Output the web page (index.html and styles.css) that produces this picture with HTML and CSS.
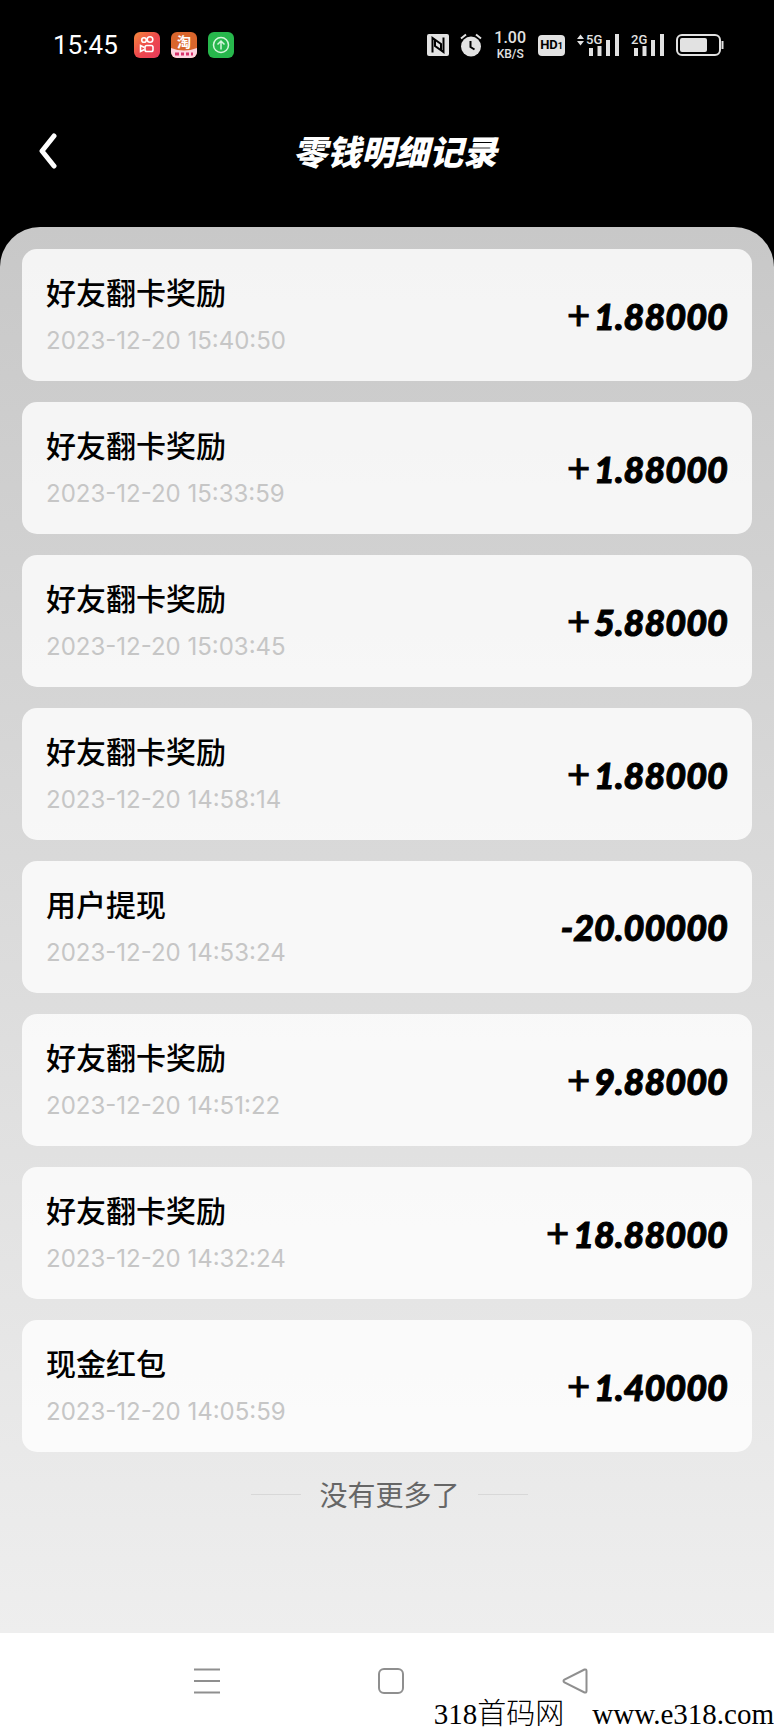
FILE: index.html
```
<!DOCTYPE html>
<html lang="zh-CN">
<head>
    <meta charset="UTF-8">
    <meta name="viewport" content="width=device-width, initial-scale=1.0">
    <title>零钱明细记录</title>
    <link rel="stylesheet" href="styles.css">
</head>
<body>
    <div class="status-bar">
        <div class="status-left">
            <span class="clock">15:45</span>
            <svg class="app-icon" viewBox="0 0 26 26">
                <defs>
                    <linearGradient id="ks" x1="0" y1="0" x2="1" y2="1">
                        <stop offset="0" stop-color="#f58a3c"/>
                        <stop offset="0.5" stop-color="#ee4a4c"/>
                        <stop offset="1" stop-color="#e63a5c"/>
                    </linearGradient>
                </defs>
                <rect width="26" height="26" rx="6" fill="url(#ks)"/>
                <g fill="none" stroke="#fff" stroke-width="1.6">
                    <circle cx="10" cy="8" r="2.3"/>
                    <circle cx="16" cy="7.500" r="2.800"/>
                    <rect x="11" y="13.500" width="8" height="6" rx="1.800"/>
                    <path d="M10.500 15.500l-4-2v6l4-2"/>
                </g>
            </svg>
            <svg class="app-icon" viewBox="0 0 26 26">
                <defs>
                    <clipPath id="tb"><rect width="26" height="26" rx="6"/></clipPath>
                </defs>
                <g clip-path="url(#tb)">
                    <rect width="26" height="26" fill="#d9652c"/>
                    <path d="M0 16q13 5 26 0v10H0z" fill="#fbd3df"/>
                    <path d="M4 22h4M10 22h3M15 22h3M20 22h2" stroke="#d8326c" stroke-width="3"/>
                </g>
                <text class="app-char" x="13" y="15" text-anchor="middle">淘</text>
            </svg>
            <svg class="app-icon" viewBox="0 0 26 26">
                <rect width="26" height="26" rx="6" fill="#27b74c"/>
                <g fill="none" stroke="#d5f5dc" stroke-width="1.500">
                    <circle cx="13" cy="13" r="7.500"/>
                    <path d="M13 17.500V9M9.500 12.500L13 9l3.500 3.500"/>
                </g>
            </svg>
        </div>
        <div class="status-right">
            <svg class="nfc" viewBox="0 0 22 22">
                <rect width="22" height="22" rx="2" fill="#e2e2e2"/>
                <path d="M5.500 18.500V4l8.500 6v6M16.500 3.500V18L8 12V6" fill="none" stroke="#000" stroke-width="2"/>
            </svg>
            <svg class="alarm" viewBox="0 0 22 24">
                <circle cx="11" cy="13.500" r="10" fill="#e2e2e2"/>
                <path d="M1 5.500l5-4M21 5.500l-5-4" stroke="#e2e2e2" stroke-width="2"/>
                <path d="M10.500 8v6l4 2.500" fill="none" stroke="#000" stroke-width="2"/>
            </svg>
            <div class="net-speed"><b>1.00</b><span>KB/S</span></div>
            <div class="hd">HD<small>1</small></div>
            <svg class="signal-5g" viewBox="0 0 44 24">
                <path d="M1 6l3.500-4.500L8 6zM1 8l3.500 4.500L8 8z" fill="#e2e2e2"/>
                <text class="net-type" x="10" y="11">5G</text>
                <path d="M13 15h4v8h-4zM21.500 13h4v10h-4zM30 7h4v16h-4zM39 1h4v22h-4z" fill="#e2e2e2"/>
            </svg>
            <svg class="signal-2g" viewBox="0 0 34 24">
                <text class="net-type" x="0" y="11">2G</text>
                <path d="M3 15h4v8H3zM11.500 13h4v10h-4zM20 7h4v16h-4zM29 1h4v22h-4z" fill="#e2e2e2"/>
            </svg>
            <svg class="battery" viewBox="0 0 48 24">
                <rect x="1" y="2" width="43" height="20" rx="5" fill="none" stroke="#e2e2e2" stroke-width="2"/>
                <rect x="4" y="5" width="27" height="14" rx="2" fill="#e2e2e2"/>
                <path d="M46.500 8v8" stroke="#e2e2e2" stroke-width="2"/>
            </svg>
        </div>
    </div>

    <header class="header">
        <button class="back" aria-label="返回">
            <svg viewBox="0 0 20 36"><path d="M17 3L5 18l12 15" fill="none" stroke="#fff" stroke-width="5" stroke-linecap="round" stroke-linejoin="round"/></svg>
        </button>
        <h1>零钱明细记录</h1>
    </header>

    <main class="panel">
        <ul class="records">
            <li class="record">
                <div>
                    <h2>好友翻卡奖励</h2>
                    <time>2023-12-20 15:40:50</time>
                </div>
                <span class="amount"><i>+</i>1.88000</span>
            </li>
            <li class="record">
                <div>
                    <h2>好友翻卡奖励</h2>
                    <time>2023-12-20 15:33:59</time>
                </div>
                <span class="amount"><i>+</i>1.88000</span>
            </li>
            <li class="record">
                <div>
                    <h2>好友翻卡奖励</h2>
                    <time>2023-12-20 15:03:45</time>
                </div>
                <span class="amount"><i>+</i>5.88000</span>
            </li>
            <li class="record">
                <div>
                    <h2>好友翻卡奖励</h2>
                    <time>2023-12-20 14:58:14</time>
                </div>
                <span class="amount"><i>+</i>1.88000</span>
            </li>
            <li class="record">
                <div>
                    <h2>用户提现</h2>
                    <time>2023-12-20 14:53:24</time>
                </div>
                <span class="amount">-20.00000</span>
            </li>
            <li class="record">
                <div>
                    <h2>好友翻卡奖励</h2>
                    <time>2023-12-20 14:51:22</time>
                </div>
                <span class="amount"><i>+</i>9.88000</span>
            </li>
            <li class="record">
                <div>
                    <h2>好友翻卡奖励</h2>
                    <time>2023-12-20 14:32:24</time>
                </div>
                <span class="amount"><i>+</i>18.88000</span>
            </li>
            <li class="record">
                <div>
                    <h2>现金红包</h2>
                    <time>2023-12-20 14:05:59</time>
                </div>
                <span class="amount"><i>+</i>1.40000</span>
            </li>
        </ul>
        <p class="no-more">没有更多了</p>
    </main>

    <nav class="nav-bar">
        <button aria-label="菜单">
            <svg viewBox="0 0 26 26"><path d="M0 1.500h26M0 13h26M0 24.500h26" stroke="#8f8f8f" stroke-width="2"/></svg>
        </button>
        <button aria-label="主页">
            <svg viewBox="0 0 26 26"><rect x="1" y="1" width="24" height="24" rx="5" fill="none" stroke="#8f8f8f" stroke-width="2"/></svg>
        </button>
        <button aria-label="后退">
            <svg viewBox="0 0 26 26"><path d="M22.500 1.500L2.500 11.500q-2 1.500 0 3l20 10q2 0.500 2-1.500V3q0-2-2-1.500z" fill="none" stroke="#8f8f8f" stroke-width="2"/></svg>
        </button>
        <div class="watermark"><span>318首码网</span><span>www.e318.com</span></div>
    </nav>
</body>
</html>
```
FILE: styles.css
```
:root {
    --status-color: #e2e2e2;
    --cjk: "Noto Sans CJK SC", sans-serif;
}

* {
    box-sizing: border-box;
}

body {
    margin: 0;
    min-height: 100vh;
    display: flex;
    flex-direction: column;
    background: #000;
    color: #000;
    font-family: Roboto, var(--cjk);
}

h1, h2, p, ul {
    margin: 0;
    padding: 0;
}

button {
    display: flex;
    padding: 0;
    border: none;
    background: none;
    cursor: pointer;
}

svg {
    display: block;
}

/* status bar */
.status-bar {
    display: flex;
    justify-content: space-between;
    align-items: center;
    height: 90px;
    padding: 0 50px 0 53px;
    color: var(--status-color);
}

.status-left,
.status-right {
    display: flex;
    align-items: center;
    gap: 11px;
}

.clock {
    margin-right: 5px;
    font-size: 26px;
    font-weight: 400;
    color: #fff;
}

.app-icon {
    width: 26px;
    height: 26px;
    overflow: visible;
}

.app-char {
    font: 700 14px var(--cjk);
    fill: #fff;
}

.nfc {
    width: 22px;
    height: 22px;
}

.alarm {
    width: 22px;
    height: 24px;
}

.net-speed {
    display: flex;
    flex-direction: column;
    align-items: center;
    width: 34px;
    font-size: 12px;
    font-weight: 500;
    line-height: 14px;
}

.net-speed b {
    font-size: 16px;
    font-weight: 500;
    line-height: 18px;
}

.hd {
    padding: 0 2px;
    border-radius: 4px;
    background: var(--status-color);
    color: #000;
    font-size: 13px;
    font-weight: 700;
    line-height: 20px;
}

.hd small {
    font-size: 9px;
}

.signal-5g {
    width: 44px;
    height: 24px;
}

.signal-2g {
    width: 34px;
    height: 24px;
}

.battery {
    width: 48px;
    height: 24px;
}

.net-type {
    font: 500 13px Roboto, sans-serif;
    fill: var(--status-color);
}

/* title bar */
.header {
    position: relative;
    display: flex;
    justify-content: center;
    align-items: center;
    height: 137px;
    padding-bottom: 16px;
}

.header h1 {
    padding-left: 16px;
    color: #fff;
    font: italic 900 34px/48px var(--cjk);
}

.back {
    position: absolute;
    left: 37px;
    top: 43px;
}

.back svg {
    width: 20px;
    height: 36px;
}

/* list */
.panel {
    flex: 1;
    padding: 22px;
    border-radius: 40px 40px 0 0;
    background: linear-gradient(#c8c8c8, #eee);
}

.records {
    display: flex;
    flex-direction: column;
    gap: 21px;
    list-style: none;
}

.record {
    display: flex;
    justify-content: space-between;
    align-items: center;
    min-height: 132px;
    padding: 16px 24px;
    border-radius: 15px;
    background: rgba(255, 255, 255, 0.8);
}

.record h2 {
    margin-bottom: 4px;
    font: 500 30px/48px var(--cjk);
}

.record time {
    display: block;
    color: #c6c6c6;
    font: 400 24px/44px Inter, sans-serif;
}

.amount {
    font: italic 900 36px/44px Lato, sans-serif;
    -webkit-text-stroke: 1px #000;
}

.amount i {
    margin-right: 4px;
    font-size: 40px;
    font-style: normal;
    font-weight: 400;
}

.no-more {
    display: flex;
    justify-content: center;
    align-items: center;
    gap: 18px;
    margin-top: 22px;
    padding-left: 5px;
    color: #666;
    font: 400 28px/40px var(--cjk);
}

.no-more::before,
.no-more::after {
    content: '';
    width: 50px;
    height: 1px;
    background: #d8d8d8;
}

/* system navigation */
.nav-bar {
    position: relative;
    display: flex;
    justify-content: space-between;
    align-items: center;
    height: 95px;
    padding: 0 24% 0 25%;
    background: #fff;
}

.nav-bar svg {
    width: 26px;
    height: 26px;
}

.watermark {
    position: absolute;
    right: 0;
    bottom: 0;
    display: flex;
    gap: 28px;
    font: 300 29px/28px "Liberation Serif", var(--cjk);
}
```
